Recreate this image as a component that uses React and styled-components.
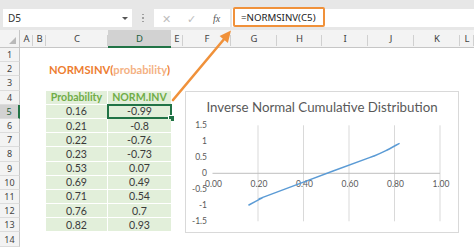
import React from "react";
import styled, { createGlobalStyle } from "styled-components";

const Global = createGlobalStyle`
  html, body { margin: 0; padding: 0; background: #ffffff; }
  body { width: 474px; height: 248px; overflow: hidden; }
`;

const UI_FONT = `"Noto Sans", "Open Sans", sans-serif`;
const CELL_FONT = `Lato, "Liberation Sans", sans-serif`;

const Frame = styled.div`
  position: relative;
  width: 474px;
  height: 248px;
  overflow: hidden;
  display: flex;
  flex-direction: column;
  background: #ffffff;
  font-family: ${UI_FONT};
`;

/* ---------- formula bar ---------- */
const FormulaStrip = styled.div`
  display: flex;
  align-items: flex-start;
  height: 30px;
  box-sizing: border-box;
  padding: 9px 0 0 3px;
  background: #e7e7e7;
  flex-shrink: 0;
`;

const NameBox = styled.div`
  width: 129px;
  height: 18px;
  box-sizing: border-box;
  background: #ffffff;
  display: flex;
  align-items: center;
  justify-content: space-between;
  padding: 0 4px 0 5px;
  font-size: 10px;
  color: #333333;
`;

const Caret = styled.span`
  width: 0;
  height: 0;
  border-left: 3px solid transparent;
  border-right: 3px solid transparent;
  border-top: 3px solid #555555;
`;

const Grip = styled.div`
  width: 22px;
  height: 18px;
  display: flex;
  flex-direction: column;
  align-items: center;
  justify-content: center;
  gap: 2px;
`;

const GripDot = styled.span`
  width: 1.5px;
  height: 1.5px;
  background: #a0a0a0;
`;

const ActionBox = styled.div`
  width: 76px;
  height: 18px;
  background: #ffffff;
  display: flex;
  align-items: center;
`;

const ActionSlot = styled.span`
  width: 25px;
  display: flex;
  justify-content: center;
  align-items: center;
  color: ${(p) => (p.$dim ? "#bdbdbd" : "#555555")};
  font-family: ${(p) => (p.$serif ? `"Liberation Serif", serif` : UI_FONT)};
  font-style: ${(p) => (p.$serif ? "italic" : "normal")};
  font-size: ${(p) => (p.$serif ? "10px" : "11px")};
`;

const FormulaInput = styled.div`
  flex: 1;
  height: 18px;
  margin-left: 2px;
  background: #ffffff;
  display: flex;
  align-items: flex-start;
`;

const FormulaHighlight = styled.div`
  margin: -2px 0 0 1px;
  width: 92px;
  height: 20px;
  box-sizing: border-box;
  border: 2.5px solid #f0913a;
  border-radius: 2px;
  display: flex;
  align-items: center;
  padding-left: 6px;
  font-size: 9.7px;
  color: #222222;
  white-space: nowrap;
`;

/* ---------- sheet ---------- */
const Sheet = styled.div`
  display: grid;
  grid-template-columns: 20px 13px 13px 62px 63px 12px 48px 46px 45px 46px 46px 46px 1fr;
  grid-template-rows: 18px repeat(14, 14.2px);
  flex: 1;
`;

const Corner = styled.div`
  background: #f3f3f3;
  border-bottom: 1px solid #c6c6c6;
  border-right: 1px solid #c6c6c6;
  box-sizing: border-box;
  position: relative;
  &::after {
    content: "";
    position: absolute;
    right: 3px;
    bottom: 3px;
    width: 0;
    height: 0;
    border-left: 7px solid transparent;
    border-bottom: 7px solid #b9b9b9;
  }
`;

const ColHeader = styled.div`
  background: ${(p) => (p.$active ? "#d2d2d2" : "#f3f3f3")};
  border-bottom: ${(p) => (p.$active ? "2px solid #217346" : "1px solid #c6c6c6")};
  box-sizing: border-box;
  display: flex;
  align-items: center;
  justify-content: center;
  font-size: 9.5px;
  color: ${(p) => (p.$active ? "#1f5e3a" : "#444444")};
  position: relative;
  &::after {
    content: "";
    position: absolute;
    right: 0;
    top: 5px;
    bottom: 1px;
    width: 1px;
    background: #d0d0d0;
  }
`;

const RowHeader = styled.div`
  background: ${(p) => (p.$active ? "#d2d2d2" : "#f3f3f3")};
  border-bottom: 1px solid #dcdcdc;
  border-right: ${(p) => (p.$active ? "2px solid #217346" : "1px solid #c6c6c6")};
  box-sizing: border-box;
  display: flex;
  align-items: center;
  justify-content: center;
  font-size: 9px;
  color: ${(p) => (p.$active ? "#1f5e3a" : "#444444")};
`;

const Cell = styled.div`
  box-sizing: border-box;
  background: #ffffff;
  min-width: 0;
`;

const TitleCell = styled.div`
  display: flex;
  align-items: center;
  padding-left: 3px;
  white-space: nowrap;
  overflow: visible;
  font-family: ${CELL_FONT};
  font-weight: 700;
  font-size: 11.2px;
  color: #ed7d31;
  position: relative;
  z-index: 1;
`;

const Faded = styled.span`
  color: #f4b183;
`;

const TableCell = styled.div`
  box-sizing: border-box;
  background: #e2efda;
  border-bottom: 1px solid #ffffff;
  border-right: ${(p) => (p.$left ? "1px solid #ffffff" : "none")};
  display: flex;
  align-items: center;
  justify-content: center;
  font-family: ${CELL_FONT};
  font-size: 10.6px;
  font-weight: ${(p) => (p.$head ? 700 : 400)};
  color: ${(p) => (p.$head ? "#70ad47" : "#3a3a3a")};
  position: relative;
  ${(p) =>
    p.$selected &&
    `
    &::before {
      content: "";
      position: absolute;
      left: -1px; top: -1px; right: -1px; bottom: -1px;
      border: 2px solid #217346;
    }
    &::after {
      content: "";
      position: absolute;
      right: -4px; bottom: -4px;
      width: 5px; height: 5px;
      background: #217346;
      border: 1px solid #ffffff;
    }
  `}
`;

/* ---------- chart ---------- */
const ChartBox = styled.div`
  position: absolute;
  left: 185px;
  top: 91px;
  width: 274px;
  height: 142px;
  box-sizing: border-box;
  background: #ffffff;
  border: 1px solid #d9d9d9;
  display: flex;
  flex-direction: column;
  font-family: ${CELL_FONT};
`;

const ChartTitle = styled.div`
  height: 27px;
  display: flex;
  align-items: center;
  justify-content: center;
  padding-top: 2px;
  box-sizing: border-box;
  font-size: 13.3px;
  color: #595959;
  white-space: nowrap;
`;

const ArrowLayer = styled.svg`
  position: absolute;
  left: 0;
  top: 0;
  pointer-events: none;
`;

const COLS = ["A", "B", "C", "D", "E", "F", "G", "H", "I", "J", "K", "L"];

const DATA = [
  [0.16, -0.99],
  [0.21, -0.8],
  [0.22, -0.76],
  [0.23, -0.73],
  [0.53, 0.07],
  [0.69, 0.49],
  [0.71, 0.54],
  [0.76, 0.7],
  [0.82, 0.93],
];

const px = (v) => 26.5 + v * 227.5;
const py = (v) => 81.3 - v * 32;

function smoothPath(pts) {
  let d = `M${pts[0][0].toFixed(2)},${pts[0][1].toFixed(2)}`;
  for (let i = 0; i < pts.length - 1; i++) {
    const p0 = pts[i - 1] || pts[i];
    const p1 = pts[i];
    const p2 = pts[i + 1];
    const p3 = pts[i + 2] || p2;
    const t = 1 / 6;
    const c1 = [p1[0] + (p2[0] - p0[0]) * t, p1[1] + (p2[1] - p0[1]) * t];
    const c2 = [p2[0] - (p3[0] - p1[0]) * t, p2[1] - (p3[1] - p1[1]) * t];
    d += ` C${c1[0].toFixed(2)},${c1[1].toFixed(2)} ${c2[0].toFixed(2)},${c2[1].toFixed(2)} ${p2[0].toFixed(2)},${p2[1].toFixed(2)}`;
  }
  return d;
}

function Chart() {
  const pts = DATA.map(([p, v]) => [px(p), py(v)]);
  const yTicks = [1.5, 1, 0.5, 0, -0.5, -1, -1.5];
  const xTicks = [0, 0.2, 0.4, 0.6, 0.8, 1.0];
  return (
    <ChartBox>
      <ChartTitle>Inverse Normal Cumulative Distribution</ChartTitle>
      <svg width="272" height="113" viewBox="0 27 272 113">
        {xTicks.slice(1).map((v) => (
          <line key={v} x1={px(v)} x2={px(v)} y1={py(1.5)} y2={py(-1.5)} stroke="#d9d9d9" strokeWidth="1" />
        ))}
        <line x1={px(0)} x2={px(1)} y1={py(0)} y2={py(0)} stroke="#bfbfbf" strokeWidth="1" />
        {yTicks.map((v) => (
          <text key={v} x="21" y={py(v) + 3} textAnchor="end" fontSize="8.5" fill="#595959" fontFamily="Lato, sans-serif">
            {v}
          </text>
        ))}
        {xTicks.map((v) => (
          <text key={v} x={px(v) + 1} y={py(0) + 14} textAnchor="middle" fontSize="8.5" fill="#595959" fontFamily="Lato, sans-serif">
            {v.toFixed(2)}
          </text>
        ))}
        <path d={smoothPath(pts)} fill="none" stroke="#5b9bd5" strokeWidth="1.5" strokeLinecap="round" />
      </svg>
    </ChartBox>
  );
}

const TABLE = [
  ["0.16", "-0.99"],
  ["0.21", "-0.8"],
  ["0.22", "-0.76"],
  ["0.23", "-0.73"],
  ["0.53", "0.07"],
  ["0.69", "0.49"],
  ["0.71", "0.54"],
  ["0.76", "0.7"],
  ["0.82", "0.93"],
];

function renderCell(row, col) {
  const key = `${row}-${col}`;
  if (row === 2 && col === "C") {
    return (
      <TitleCell key={key}>
        NORMSINV(<Faded>probability</Faded>)
      </TitleCell>
    );
  }
  if (row >= 4 && row <= 13 && (col === "C" || col === "D")) {
    const left = col === "C";
    if (row === 4) {
      return (
        <TableCell key={key} $head $left={left}>
          {left ? "Probability" : "NORM.INV"}
        </TableCell>
      );
    }
    const rec = TABLE[row - 5];
    return (
      <TableCell key={key} $left={left} $selected={row === 5 && col === "D"}>
        {left ? rec[0] : rec[1]}
      </TableCell>
    );
  }
  return <Cell key={key} />;
}

export default function App() {
  const rows = Array.from({ length: 14 }, (_, i) => i + 1);
  return (
    <Frame>
      <Global />
      <FormulaStrip>
        <NameBox>
          <span>D5</span>
          <Caret />
        </NameBox>
        <Grip>
          <GripDot />
          <GripDot />
          <GripDot />
        </Grip>
        <ActionBox>
          <ActionSlot $dim>✕</ActionSlot>
          <ActionSlot $dim>✓</ActionSlot>
          <ActionSlot $serif>fx</ActionSlot>
        </ActionBox>
        <FormulaInput>
          <FormulaHighlight>=NORMSINV(C5)</FormulaHighlight>
        </FormulaInput>
      </FormulaStrip>
      <Sheet>
        <Corner />
        {COLS.map((c) => (
          <ColHeader key={c} $active={c === "D"}>
            {c}
          </ColHeader>
        ))}
        {rows.map((r) => (
          <React.Fragment key={r}>
            <RowHeader $active={r === 5}>{r}</RowHeader>
            {COLS.map((c) => renderCell(r, c))}
          </React.Fragment>
        ))}
      </Sheet>
      <Chart />
      <ArrowLayer width="474" height="248" viewBox="0 0 474 248">
        <line x1="173" y1="100" x2="225" y2="38" stroke="#f0913a" strokeWidth="2.6" strokeLinecap="round" />
        <polygon points="231,30.5 227.9,43 219.6,36" fill="#f0913a" />
      </ArrowLayer>
    </Frame>
  );
}
